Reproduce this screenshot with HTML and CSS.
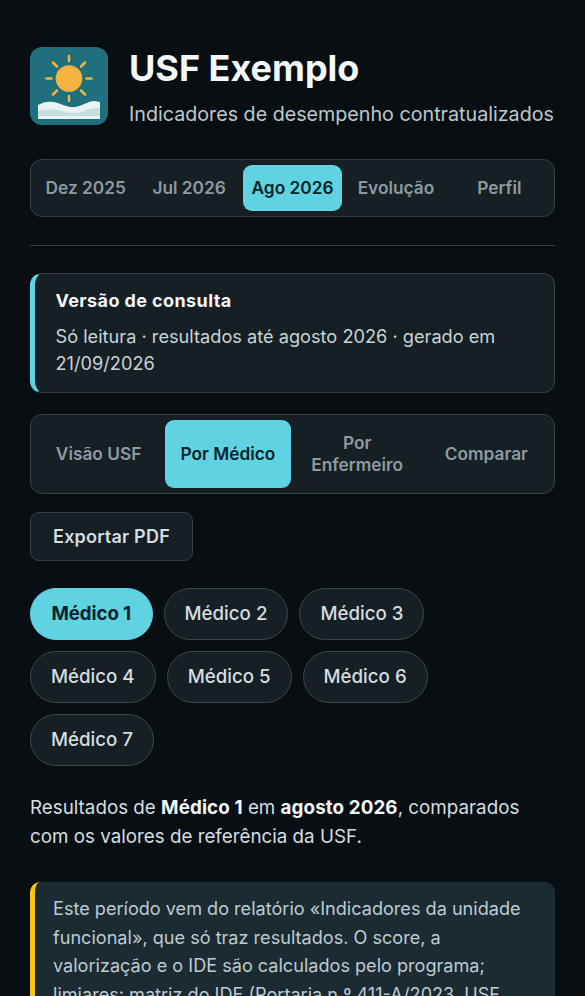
FILE: index.html
```html
<!DOCTYPE html>
<html lang="pt">
<head>
<meta charset="utf-8">
<title>USF Exemplo</title>
<link rel="stylesheet" href="styles.css">
</head>
<body>
<div class="page">
  <header class="head">
    <svg class="logo" viewBox="0 0 78 78" aria-hidden="true">
      <rect width="78" height="78" rx="12" fill="#1f6f7c"/>
      <g stroke="#f4b33f" stroke-width="2.500" stroke-linecap="round">
        <path d="M39 9v5M39 49v5M16.500 31.500h5M56.500 31.500h5M23 15.500l4 4M51 43.500l4 4M55 15.500l-4 4M27 43.500l-4 4"/>
      </g>
      <circle cx="39" cy="31.500" r="13.300" fill="#f4b33f"/>
      <path d="M8 72V58c5-3 10-4 16-3s14 6 21 5 13-6 20-6l5 1v17z" fill="#e8f3f2"/>
      <path d="M8 69v-5c8-2 15-2 23 0s15 3 23 0 11-3 16-3v8z" fill="#c4e0dd"/>
    </svg>
    <div class="titles">
      <h1>USF Exemplo</h1>
      <p>Indicadores de desempenho contratualizados</p>
    </div>
  </header>

  <nav class="tabs period">
    <span class="tab">Dez 2025</span>
    <span class="tab">Jul 2026</span>
    <span class="tab on">Ago 2026</span>
    <span class="tab">Evolução</span>
    <span class="tab">Perfil</span>
  </nav>

  <hr class="rule">

  <section class="notice">
    <strong>Versão de consulta</strong>
    <p>Só leitura · resultados até agosto 2026 · gerado em 21/09/2026</p>
  </section>

  <nav class="tabs views">
    <span class="tab">Visão USF</span>
    <span class="tab on">Por Médico</span>
    <span class="tab">Por Enfermeiro</span>
    <span class="tab">Comparar</span>
  </nav>

  <button class="export">Exportar PDF</button>

  <div class="chips">
    <span class="chip on">Médico 1</span>
    <span class="chip">Médico 2</span>
    <span class="chip">Médico 3</span>
    <span class="chip">Médico 4</span>
    <span class="chip">Médico 5</span>
    <span class="chip">Médico 6</span>
    <span class="chip">Médico 7</span>
  </div>

  <p class="intro">Resultados de <b>Médico 1</b> em <b>agosto 2026</b>, comparados com os valores de referência da USF.</p>

  <section class="warn">Este período vem do relatório «Indicadores da unidade funcional», que só traz resultados. O score, a valorização e o IDE são calculados pelo programa; limiares: matriz do IDE (Portaria n.º 411-A/2023, USF modelo B).</section>
</div>
</body>
</html>
```
FILE: styles.css
```css
* { box-sizing: border-box; }
html, body { margin: 0; height: 996px; overflow: hidden; background: #090e12; }
body { font-family: Inter, "Liberation Sans", sans-serif; color: #dfe6ea; }
.page { padding: 47px 30px 0; height: 996px; overflow: hidden; }
.head { display: flex; gap: 21px; align-items: flex-start; }
.logo { width: 78px; height: 78px; flex: none; }
.titles h1 { margin: 0; font-size: 36px; line-height: 42px; font-weight: 700; color: #f4f7f9; }
.titles p { margin: 12px 0 0; font-size: 19.700px; line-height: 27px; color: #bcc8ce; white-space: nowrap; }
.tabs { display: flex; gap: 4px; background: #151f24; border: 1px solid #354147; border-radius: 12px; padding: 5px; }
.tab { flex: 1 1 0; min-width: 0; display: flex; align-items: center; justify-content: center; text-align: center; font-size: 17.300px; font-weight: 600; line-height: 22px; color: #8d9aa1; border-radius: 9px; padding-bottom: 1px; }
.tab.on { background: #5fd3e2; color: #08232b; }
.period { margin-top: 31px; height: 58px; }
.views .tab { padding: 0 15px 1px; }
.rule { margin: 28px 0 0; border: 0; border-top: 1px solid #354147; }
.notice { margin-top: 27px; background: #151f24; border: 1px solid #354147; border-left: 5px solid #5fd3e2; border-radius: 12px; padding: 15px 20px 14px 20.500px; height: 120px; }
.notice strong { display: block; font-size: 18px; line-height: 24px; font-weight: 700; color: #f4f7f9; letter-spacing: 0.4px; }
.notice p { margin: 10px 0 0; font-size: 18.200px; line-height: 27px; color: #c9d3d8; }
.views { margin-top: 21px; height: 80px; }
.export { display: block; margin-top: 18px; height: 49px; width: 163px; background: #151f24; border: 1px solid #354147; border-radius: 9px; font: 600 18px Inter, sans-serif; letter-spacing: 0.2px; color: #d5dde1; padding: 0; }
.chips { display: flex; flex-wrap: wrap; gap: 11px; margin-top: 27px; }
.chip { height: 52px; padding: 0 20px 2px; display: flex; align-items: center; border: 1px solid #3a464b; border-radius: 26px; background: #151f24; font-size: 18.700px; font-weight: 500; color: #d5dde1; }
.chip.on { background: #5fd3e2; color: #08232b; font-weight: 700; border-color: #5fd3e2; letter-spacing: -0.1px; padding: 0 20.500px 2px; }
.intro { margin: 27px 0 0; font-size: 18.800px; line-height: 29px; color: #d5dde1; }
.intro b { color: #f4f7f9; font-weight: 700; letter-spacing: 0.1px; }
.warn { margin-top: 31px; background: #1c2a31; border-left: 5px solid #f5c518; border-radius: 10px; padding: 12px 18px; font-size: 18.100px; line-height: 28.500px; color: #bcccd2; }
```
